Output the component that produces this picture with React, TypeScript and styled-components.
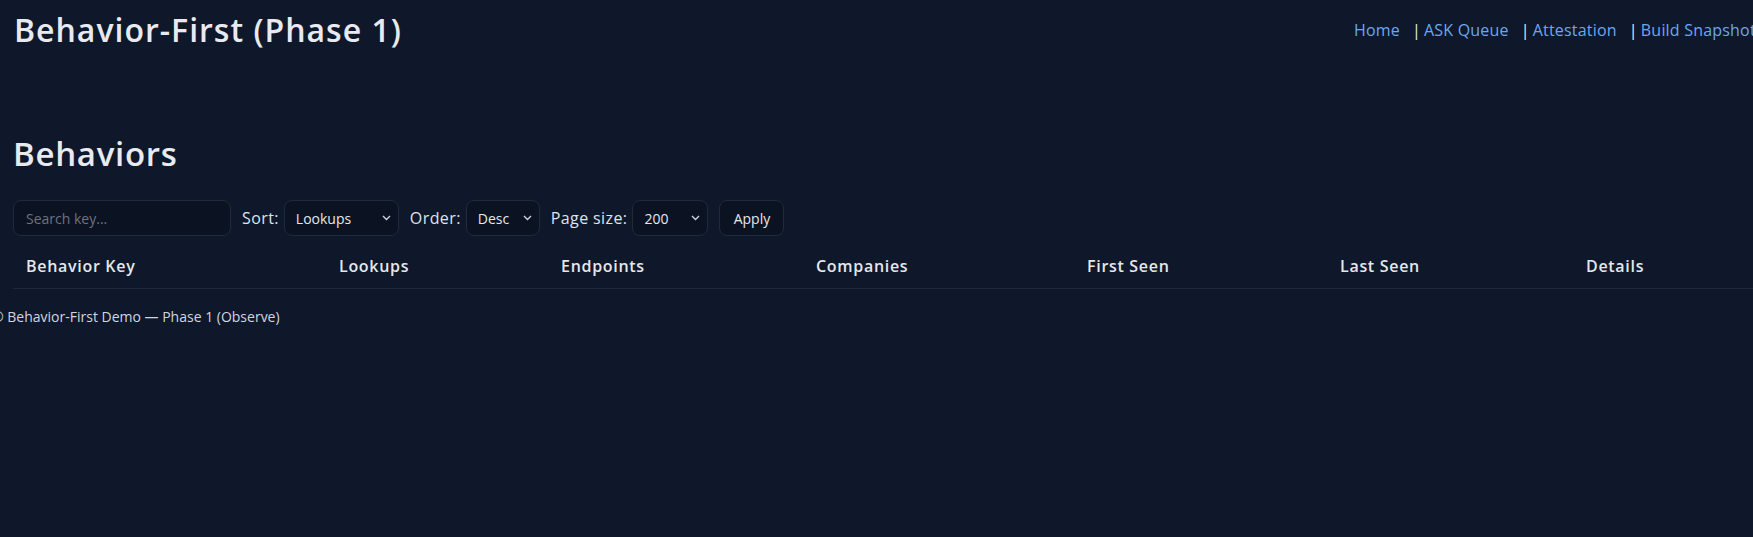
import React from "react";
import styled, { createGlobalStyle } from "styled-components";

const Global = createGlobalStyle`
  html, body {
    margin: 0;
    padding: 0;
    background: #0f172a;
    overflow: hidden;
  }
  body {
    font-family: "Open Sans", "Noto Sans", sans-serif;
    color: #e5e7eb;
  }
  * { box-sizing: border-box; }
`;

const Page = styled.div`
  width: 1860px;
  min-height: 537px;
`;

const Header = styled.header`
  display: grid;
  grid-template-columns: 1340px auto;
  align-items: start;
  padding: 10px 0 0 14px;
  height: 64px;
`;

const Title = styled.h1`
  margin: 0;
  font-size: 32px;
  line-height: 40px;
  font-weight: 600;
  letter-spacing: 1px;
  color: #e8eaf0;
  white-space: nowrap;
`;

const Nav = styled.nav`
  display: flex;
  align-items: center;
  margin-top: 8px;
  font-size: 16px;
  line-height: 24px;
  letter-spacing: 0.2px;
  white-space: nowrap;
`;

const NavLink = styled.a`
  color: #6aa7f0;
  text-decoration: none;
  margin-right: 12px;
`;

const Sep = styled.span`
  color: #e5e7eb;
  margin-right: 3px;
`;

const Main = styled.main`
  padding: 0 0 0 13px;
`;

const SectionTitle = styled.h2`
  margin: 70px 0 0;
  font-size: 33px;
  line-height: 40px;
  font-weight: 600;
  letter-spacing: 0.7px;
  color: #e8eaf0;
`;

const Controls = styled.div`
  display: flex;
  align-items: center;
  gap: 11px;
  margin-top: 26px;
  height: 36px;
`;

const fieldBase = `
  height: 36px;
  background: #0b1322;
  border: 1px solid #1f2a3d;
  border-radius: 8px;
  color: #e5e7eb;
  font-family: "Open Sans", "Noto Sans", sans-serif;
  font-size: 14px;
  outline: none;
`;

const SearchInput = styled.input`
  ${fieldBase}
  width: 218px;
  padding: 0 12px;
  &::placeholder {
    color: #6b7280;
  }
`;

const Label = styled.label`
  display: inline-flex;
  align-items: center;
  gap: 5px;
  font-size: 16px;
  letter-spacing: 0.4px;
  color: #dfe3ea;
`;

const SelectWrap = styled.span<{ $w: number }>`
  position: relative;
  display: inline-block;
  width: ${(p) => p.$w}px;
  height: 36px;
  letter-spacing: 0;
`;

const Select = styled.select`
  ${fieldBase}
  appearance: none;
  -webkit-appearance: none;
  width: 100%;
  padding: 0 24px 0 11px;
`;

const Chevron = styled.svg`
  position: absolute;
  right: 8px;
  top: 15px;
  width: 9px;
  height: 6px;
  pointer-events: none;
`;

const Button = styled.button`
  ${fieldBase}
  width: 65px;
  padding: 0;
  cursor: pointer;
`;

const Table = styled.table`
  margin-top: 8px;
  border-collapse: collapse;
  table-layout: fixed;
  width: 1810px;
`;

const Th = styled.th`
  text-align: left;
  font-size: 16px;
  font-weight: 600;
  letter-spacing: 0.7px;
  color: #e5e7eb;
  height: 44px;
  padding: 0 12px 0 13px;
  line-height: 20px;
  border-bottom: 1px solid #1e293b;
  white-space: nowrap;
`;

const Footer = styled.footer`
  margin: 18px 0 0 -21px;
  font-size: 14px;
  line-height: 20px;
  color: #cfd6e0;
  white-space: nowrap;
`;

const ChevronIcon = () => (
  <Chevron viewBox="0 0 9 6">
    <path d="M1 1l3.5 3.5L8 1" fill="none" stroke="#cbd5e1" strokeWidth="1.4" />
  </Chevron>
);

const columns: { label: string; width: number }[] = [
  { label: "Behavior Key", width: 313 },
  { label: "Lookups", width: 222 },
  { label: "Endpoints", width: 255 },
  { label: "Companies", width: 271 },
  { label: "First Seen", width: 253 },
  { label: "Last Seen", width: 246 },
  { label: "Details", width: 250 },
];

export default function App() {
  return (
    <>
      <Global />
      <Page>
        <Header>
          <Title>Behavior-First (Phase 1)</Title>
          <Nav>
            <NavLink href="#">Home</NavLink>
            <Sep>|</Sep>
            <NavLink href="#">ASK Queue</NavLink>
            <Sep>|</Sep>
            <NavLink href="#">Attestation</NavLink>
            <Sep>|</Sep>
            <NavLink href="#">Build Snapshot</NavLink>
          </Nav>
        </Header>
        <Main>
          <SectionTitle>Behaviors</SectionTitle>
          <Controls>
            <SearchInput placeholder="Search key..." />
            <Label>
              Sort:
              <SelectWrap $w={115}>
                <Select defaultValue="lookups">
                  <option value="lookups">Lookups</option>
                  <option value="endpoints">Endpoints</option>
                  <option value="companies">Companies</option>
                </Select>
                <ChevronIcon />
              </SelectWrap>
            </Label>
            <Label>
              Order:
              <SelectWrap $w={74}>
                <Select defaultValue="desc">
                  <option value="desc">Desc</option>
                  <option value="asc">Asc</option>
                </Select>
                <ChevronIcon />
              </SelectWrap>
            </Label>
            <Label>
              Page size:
              <SelectWrap $w={76}>
                <Select defaultValue="200">
                  <option value="50">50</option>
                  <option value="100">100</option>
                  <option value="200">200</option>
                </Select>
                <ChevronIcon />
              </SelectWrap>
            </Label>
            <Button>Apply</Button>
          </Controls>
          <Table>
            <colgroup>
              {columns.map((c) => (
                <col key={c.label} style={{ width: c.width }} />
              ))}
            </colgroup>
            <thead>
              <tr>
                {columns.map((c) => (
                  <Th key={c.label}>{c.label}</Th>
                ))}
              </tr>
            </thead>
            <tbody />
          </Table>
          <Footer>© Behavior-First Demo — Phase 1 (Observe)</Footer>
        </Main>
      </Page>
    </>
  );
}
